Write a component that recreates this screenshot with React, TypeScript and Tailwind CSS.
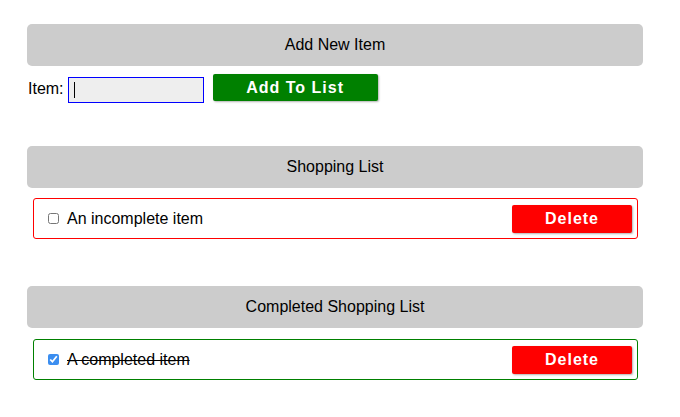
import React from "react";

const font = { fontFamily: '"Liberation Sans", Arial, Helvetica, sans-serif' };

function Header({ title }: { title: string }) {
  return (
    <div className="flex h-[42px] items-center justify-center rounded-[5px] bg-[#cccccc] text-[16px] text-black">
      {title}
    </div>
  );
}

function DeleteButton() {
  return (
    <button className="h-[28px] w-[120px] rounded-[2px] bg-[#ff0000] text-[16px] font-bold tracking-[1px] text-white shadow-[1px_1px_2px_rgba(0,0,0,0.3)]">
      Delete
    </button>
  );
}

function ItemRow({ label, done }: { label: string; done: boolean }) {
  return (
    <div
      className={`ml-[6px] mr-[5px] flex h-[41px] items-center justify-between rounded-[3px] border pl-[14px] pr-[5px] ${
        done ? "border-[#008000]" : "border-[#ff0000]"
      }`}
    >
      <div className="flex items-center">
        <input
          type="checkbox"
          defaultChecked={done}
          className="m-0 h-[11px] w-[11px] accent-[#3b8ef0]"
        />
        <span className={`ml-[8px] text-[16px] text-black ${done ? "line-through" : ""}`}>{label}</span>
      </div>
      <DeleteButton />
    </div>
  );
}

export default function App() {
  return (
    <main className="min-h-screen bg-white" style={font}>
      <div className="ml-[27px] w-[616px] pt-[24px]">
        <Header title="Add New Item" />

        <div className="mt-[8px] flex items-start">
          <span className="ml-[1px] mt-[6px] text-[16px] leading-[18px] text-black">Item:</span>
          <div className="relative ml-[4px] mt-[3px]">
            <input
              type="text"
              className="block h-[26px] w-[136px] border border-[#0000ff] bg-[#eeeeee] outline-none"
            />
            <span className="absolute left-[6px] top-[5px] h-[16px] w-[1px] bg-black" />
          </div>
          <button className="ml-[9px] h-[27px] w-[165px] rounded-[2px] bg-[#008000] text-[16px] font-bold tracking-[1px] text-white shadow-[1px_1px_2px_rgba(0,0,0,0.3)]">
            Add To List
          </button>
        </div>

        <div className="mt-[43px]">
          <Header title="Shopping List" />
        </div>
        <div className="mt-[10px]">
          <ItemRow label="An incomplete item" done={false} />
        </div>

        <div className="mt-[47px]">
          <Header title="Completed Shopping List" />
        </div>
        <div className="mt-[11px]">
          <ItemRow label="A completed item" done={true} />
        </div>
      </div>
    </main>
  );
}
